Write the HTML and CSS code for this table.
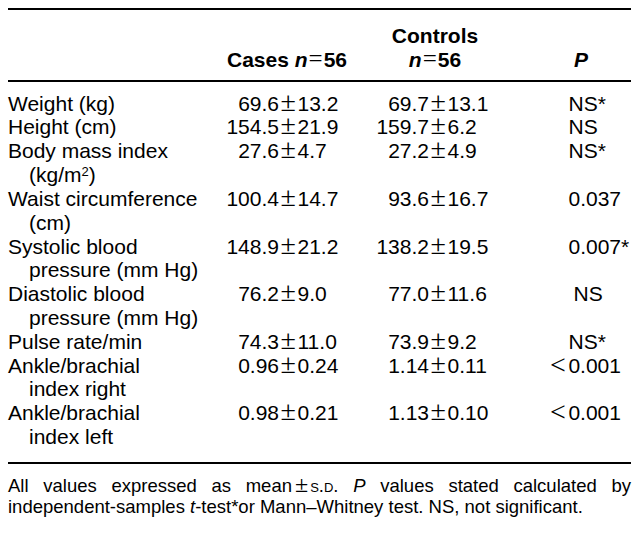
FILE: index.html
```html
<!DOCTYPE html>
<html lang="en">
<head>
<meta charset="utf-8">
<title>Table</title>
<link rel="stylesheet" href="styles.css">
</head>
<body>
<div class="table">
  <div class="thead row">
    <div class="h-cases"><b>Cases <i>n</i><span class="eq">=</span>56</b></div>
    <div class="h-controls"><b>Controls<br><i>n</i><span class="eq">=</span>56</b></div>
    <div class="h-p"><b><i>P</i></b></div>
  </div>
  <div class="tbody">
    <div class="row">
      <div class="label">Weight (kg)</div>
      <div class="mean">69.6</div><div class="pm"><span>±</span></div><div class="sd">13.2</div>
      <div class="mean">69.7</div><div class="pm"><span>±</span></div><div class="sd">13.1</div>
      <div class="p">NS*</div>
    </div>
    <div class="row">
      <div class="label">Height (cm)</div>
      <div class="mean">154.5</div><div class="pm"><span>±</span></div><div class="sd">21.9</div>
      <div class="mean">159.7</div><div class="pm"><span>±</span></div><div class="sd">6.2</div>
      <div class="p">NS</div>
    </div>
    <div class="row">
      <div class="label">Body mass index<br>(kg/m<sup>2</sup>)</div>
      <div class="mean">27.6</div><div class="pm"><span>±</span></div><div class="sd">4.7</div>
      <div class="mean">27.2</div><div class="pm"><span>±</span></div><div class="sd">4.9</div>
      <div class="p">NS*</div>
    </div>
    <div class="row">
      <div class="label">Waist circumference<br>(cm)</div>
      <div class="mean">100.4</div><div class="pm"><span>±</span></div><div class="sd">14.7</div>
      <div class="mean">93.6</div><div class="pm"><span>±</span></div><div class="sd">16.7</div>
      <div class="p">0.037</div>
    </div>
    <div class="row">
      <div class="label">Systolic blood<br>pressure (mm Hg)</div>
      <div class="mean">148.9</div><div class="pm"><span>±</span></div><div class="sd">21.2</div>
      <div class="mean">138.2</div><div class="pm"><span>±</span></div><div class="sd">19.5</div>
      <div class="p">0.007*</div>
    </div>
    <div class="row">
      <div class="label">Diastolic blood<br>pressure (mm Hg)</div>
      <div class="mean">76.2</div><div class="pm"><span>±</span></div><div class="sd">9.0</div>
      <div class="mean">77.0</div><div class="pm"><span>±</span></div><div class="sd">11.6</div>
      <div class="p p-center">NS</div>
    </div>
    <div class="row">
      <div class="label">Pulse rate/min</div>
      <div class="mean">74.3</div><div class="pm"><span>±</span></div><div class="sd">11.0</div>
      <div class="mean">73.9</div><div class="pm"><span>±</span></div><div class="sd">9.2</div>
      <div class="p">NS*</div>
    </div>
    <div class="row">
      <div class="label">Ankle/brachial<br>index right</div>
      <div class="mean">0.96</div><div class="pm"><span>±</span></div><div class="sd">0.24</div>
      <div class="mean">1.14</div><div class="pm"><span>±</span></div><div class="sd">0.11</div>
      <div class="p p-lt"><span class="lt">&lt;</span>0.001</div>
    </div>
    <div class="row">
      <div class="label">Ankle/brachial<br>index left</div>
      <div class="mean">0.98</div><div class="pm"><span>±</span></div><div class="sd">0.21</div>
      <div class="mean">1.13</div><div class="pm"><span>±</span></div><div class="sd">0.10</div>
      <div class="p p-lt"><span class="lt">&lt;</span>0.001</div>
    </div>
  </div>
  <p class="note">All values expressed as mean<span class="pm-inline">±</span><span class="sc">s.d.</span> <i>P</i> values stated calculated by independent-samples <i>t</i>-test*or Mann–Whitney test. NS, not significant.</p>
</div>
</body>
</html>
```
FILE: styles.css
```css
html, body {
  margin: 0;
  padding: 0;
  background: #fff;
}

body {
  padding: 8px;
  font-family: "Liberation Sans", Arial, sans-serif;
  color: #000;
}

.table {
  width: 623px;
}

.row {
  display: grid;
  grid-template-columns: 211px 60px 18.5px 62.5px 69px 18.5px 102.5px 81px;
  font-size: 21px;
  line-height: 23.83px;
}

.thead {
  border-top: 2px solid #000;
  border-bottom: 2px solid #000;
  padding: 14.3px 0 8.1px;
}

.thead b {
  font-weight: bold;
}

.eq {
  font-family: "Liberation Serif", serif;
  font-weight: normal;
  font-size: 25px;
  line-height: 10px;
  margin: 0 1px;
}

.h-cases {
  grid-column: 2 / 5;
  align-self: end;
  text-align: right;
  padding-right: 13px;
}

.h-controls {
  grid-column: 5 / 8;
  text-align: center;
  padding-right: 40px;
}

.h-p {
  grid-column: 8 / 9;
  align-self: end;
  padding-left: 24px;
}

.tbody {
  padding: 9.5px 0 13px;
  border-bottom: 2px solid #000;
}

.label {
  padding-left: 21px;
  text-indent: -21px;
}

.label sup {
  font-size: 0.62em;
  line-height: 0;
  vertical-align: 0.5em;
}

.mean {
  text-align: right;
}

.pm {
  text-align: center;
  white-space: nowrap;
}

.pm span {
  font-family: "Liberation Serif", serif;
  font-size: 28px;
  line-height: 10px;
}

.sd {
  text-align: left;
}

.p {
  padding-left: 18.5px;
}

.p-center {
  padding-left: 23.5px;
}

.p-lt {
  padding-left: 0;
}

.lt {
  display: inline-block;
  width: 18.4px;
  font-family: "Liberation Serif", serif;
  font-size: 28px;
  line-height: 10px;
  vertical-align: -1px;
}

.note {
  margin: 11px 0 0;
  font-size: 18.5px;
  line-height: 21px;
  text-align: justify;
}

.pm-inline {
  font-family: "Liberation Serif", serif;
  font-size: 24px;
  line-height: 10px;
  margin: 0 2px 0 3px;
}

.sc {
  font-variant: small-caps;
}
```
